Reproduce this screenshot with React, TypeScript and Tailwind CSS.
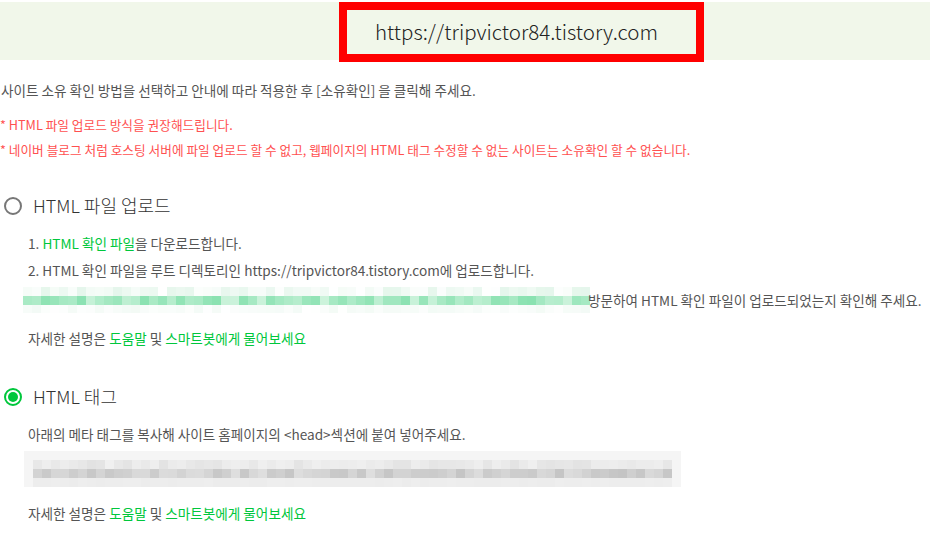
import React from "react";

function rand(seed: number) {
  let s = seed;
  return () => {
    s = (s * 9301 + 49297) % 233280;
    return s / 233280;
  };
}

function mix(a: number[], b: number[], t: number) {
  const c = a.map((v, i) => Math.round(v + (b[i] - v) * t));
  return `rgb(${c[0]},${c[1]},${c[2]})`;
}

type Row = { h: number; from: number[]; to: number[]; seed: number };

// pixelated (blurred) content block
function Mosaic({ rows, cols, cell }: { rows: Row[]; cols: number; cell: number }) {
  return (
    <div className="flex flex-col">
      {rows.map((row, r) => {
        const rnd = rand(row.seed);
        return (
          <div key={r} className="flex">
            {Array.from({ length: cols }).map((_, i) => (
              <div
                key={i}
                style={{ width: cell, height: row.h, background: mix(row.from, row.to, rnd()) }}
              />
            ))}
          </div>
        );
      })}
    </div>
  );
}

function Radio({ checked }: { checked?: boolean }) {
  if (checked) {
    return (
      <span className="flex h-[18px] w-[18px] items-center justify-center rounded-full border-[2px] border-[#00c73c]">
        <span className="h-[10px] w-[10px] rounded-full bg-[#00c73c]" />
      </span>
    );
  }
  return <span className="h-[18px] w-[18px] rounded-full border-[2px] border-[#777]" />;
}

function HelpLine() {
  return (
    <p className="text-[13.6px] text-[#555]">
      자세한 설명은 <span className="text-[#00c73c]">도움말</span> 및{" "}
      <span className="text-[#00c73c]">스마트봇에게 물어보세요</span>
    </p>
  );
}

export default function App() {
  return (
    <div className="h-[557px] w-[930px] overflow-hidden bg-white font-['Noto_Sans_CJK_KR',sans-serif] text-[#555]">
      <div className="relative h-[60px]">
        <div className="mt-[2px] h-[58px] bg-[#f1f7ea]" />
        <div className="absolute left-[339px] top-0 flex h-[60px] w-[365px] items-center border-[8px] border-[#ff0000] pl-[28px] pb-[1px]">
          <span className="text-[20.5px] font-light text-[#222]">https://tripvictor84.tistory.com</span>
        </div>
      </div>

      <p className="mt-[18px] pl-[1px] text-[13.6px] leading-[20px]">
        사이트 소유 확인 방법을 선택하고 안내에 따라 적용한 후 [소유확인] 을 클릭해 주세요.
      </p>
      <p className="mt-[15px] text-[12.7px] leading-[20px] text-[#ff5050]">* HTML 파일 업로드 방식을 권장해드립니다.</p>
      <p className="mt-[5px] text-[12.7px] leading-[20px] text-[#ff5050]">
        * 네이버 블로그 처럼 호스팅 서버에 파일 업로드 할 수 없고, 웹페이지의 HTML 태그 수정할 수 없는 사이트는 소유확인 할 수 없습니다.
      </p>

      <div className="mt-[32px] flex items-center gap-[11px] pl-[4px]">
        <Radio />
        <span className="text-[18px] font-light text-[#333]">HTML 파일 업로드</span>
      </div>

      <div className="mt-[14px] flex flex-col gap-[7px] pl-[28px] text-[13.6px] leading-[20px]">
        <p>
          1. <span className="text-[#00c73c]">HTML 확인 파일</span>을 다운로드합니다.
        </p>
        <p>2. HTML 확인 파일을 루트 디렉토리인 https://tripvictor84.tistory.com에 업로드합니다.</p>
        <div className="flex items-center">
          <div className="-ml-[5px]">
            <Mosaic
              cols={63}
              cell={9}
              rows={[
                { h: 9, from: [255, 255, 255], to: [228, 246, 235], seed: 3 },
                { h: 9, from: [135, 225, 175], to: [205, 243, 220], seed: 7 },
                { h: 8, from: [255, 255, 255], to: [242, 250, 245], seed: 11 },
              ]}
            />
          </div>
          <span className="-ml-[2px]">방문하여 HTML 확인 파일이 업로드되었는지 확인해 주세요.</span>
        </div>
        <div className="mt-[8px]">
          <HelpLine />
        </div>
      </div>

      <div className="mt-[35px] flex items-center gap-[11px] pl-[4px]">
        <Radio checked />
        <span className="text-[18px] font-light text-[#333]">HTML 태그</span>
      </div>

      <div className="mt-[14px] pl-[28px] text-[13.6px] leading-[20px]">
        <p>아래의 메타 태그를 복사해 사이트 홈페이지의 &lt;head&gt;섹션에 붙여 넣어주세요.</p>
        <div className="-ml-[4px] mt-[7px] w-[657px] bg-[#f5f5f5] px-[9px] pt-[9px]">
          <Mosaic
            cols={71}
            cell={9}
            rows={[
              { h: 9, from: [226, 226, 226], to: [240, 240, 240], seed: 5 },
              { h: 9, from: [196, 196, 196], to: [222, 222, 222], seed: 9 },
              { h: 9, from: [236, 236, 236], to: [238, 238, 238], seed: 13 },
            ]}
          />
        </div>
        <div className="mt-[16px]">
          <HelpLine />
        </div>
      </div>
    </div>
  );
}
